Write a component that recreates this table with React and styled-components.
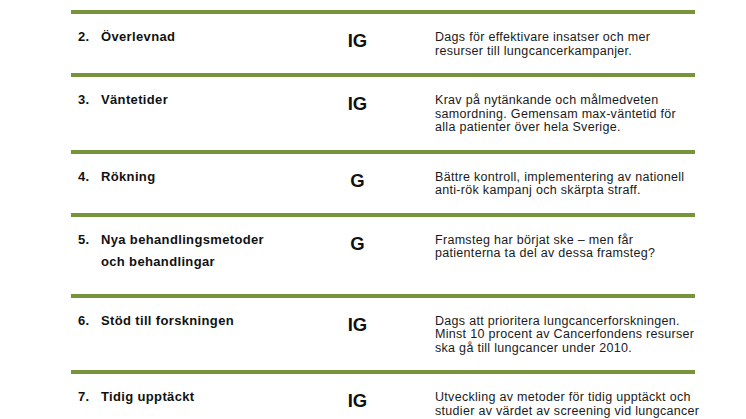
import styled, { createGlobalStyle } from "styled-components";

const Global = createGlobalStyle`
    html, body {
        margin: 0;
        padding: 0;
        background: #fff;
        overflow: hidden;
    }
    body {
        font-family: "Liberation Sans", Arial, sans-serif;
        color: #111;
    }
`

const Tabell = styled.section`
    width: 624px;
    margin: 10px 0 0 71px;
`

const Rad = styled.article`
    display: grid;
    grid-template-columns: 30px 199px 115px 1fr;
    border-top: 4px solid #77933c;
`

const Nummer = styled.div`
    padding: 12px 0 0 7px;
    font-size: 13px;
    font-weight: bold;
    line-height: 22px;
    letter-spacing: 0.3px;
`

const Rubrik = styled.div`
    padding: 12px 0 21px 0;
    font-size: 13px;
    font-weight: bold;
    line-height: 22px;
    letter-spacing: 0.35px;
`

const Betyg = styled.div`
    padding-top: 16px;
    text-align: center;
    font-size: 18.5px;
    font-weight: bold;
    line-height: 22px;
`

const Beskrivning = styled.p`
    margin: 0;
    padding: 17px 0 15px 20px;
    font-size: 12.5px;
    line-height: 13.5px;
    letter-spacing: 0.3px;
    color: #1a1a1a;
    white-space: nowrap;
`

const punkter = [
    { nr: 2, rubrik: ["Överlevnad"], betyg: "IG", text: ["Dags för effektivare insatser och mer", "resurser till lungcancerkampanjer."] },
    { nr: 3, rubrik: ["Väntetider"], betyg: "IG", text: ["Krav på nytänkande och målmedveten", "samordning. Gemensam max-väntetid för", "alla patienter över hela Sverige."] },
    { nr: 4, rubrik: ["Rökning"], betyg: "G", text: ["Bättre kontroll, implementering av nationell", "anti-rök kampanj och skärpta straff."] },
    { nr: 5, rubrik: ["Nya behandlingsmetoder", "och behandlingar"], betyg: "G", text: ["Framsteg har börjat ske – men får", "patienterna ta del av dessa framsteg?"] },
    { nr: 6, rubrik: ["Stöd till forskningen"], betyg: "IG", text: ["Dags att prioritera lungcancerforskningen.", "Minst 10 procent av Cancerfondens resurser", "ska gå till lungcancer under 2010."] },
    { nr: 7, rubrik: ["Tidig upptäckt"], betyg: "IG", text: ["Utveckling av metoder för tidig upptäckt och", "studier av värdet av screening vid lungcancer"] },
]

const Rader = ({ lista }) => lista.map((rad, i) => (
    <span key={i}>{rad}{i < lista.length - 1 && <br />}</span>
))

const App = () => {
    return (
        <>
            <Global />
            <Tabell>
                {punkter.map((p) => (
                    <Rad key={p.nr}>
                        <Nummer>{p.nr}.</Nummer>
                        <Rubrik><Rader lista={p.rubrik} /></Rubrik>
                        <Betyg>{p.betyg}</Betyg>
                        <Beskrivning><Rader lista={p.text} /></Beskrivning>
                    </Rad>
                ))}
            </Tabell>
        </>
    )
}

export default App;
